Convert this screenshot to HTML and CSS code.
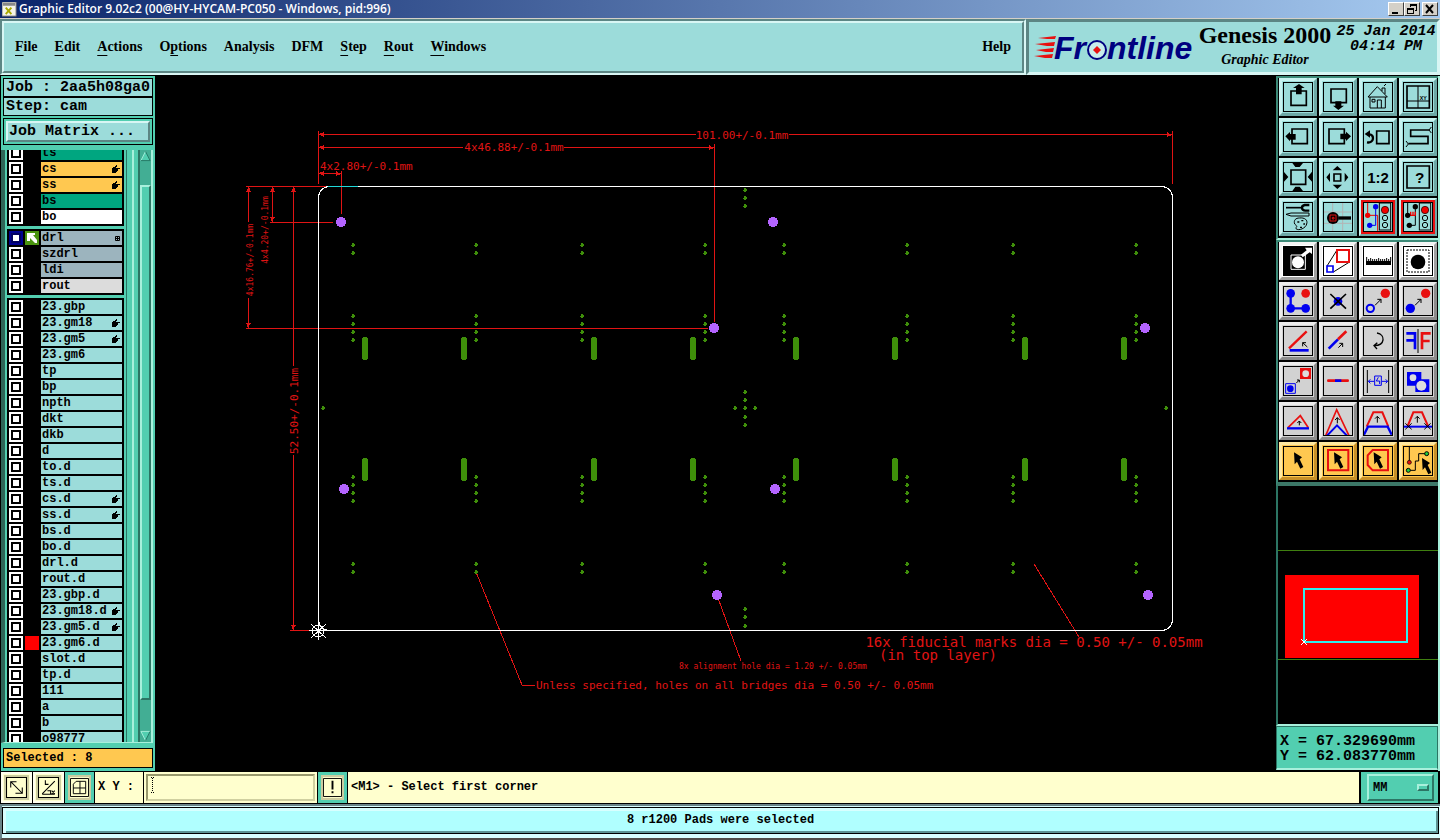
FILE: index.html
```html
<!DOCTYPE html>
<html lang="en">
<head>
<meta charset="utf-8">
<title>Graphic Editor</title>
<link rel="stylesheet" href="styles.css">
</head>
<body>
<svg class="defs" aria-hidden="true">
  <defs>
    <path id="hand" d="M4 0h1v2h-1v1h4v1H6v2H5v1H4v1H0V3h1V2h2V1h1z" shape-rendering="crispEdges"/>
    <path id="cursor" d="M0 0L24 15L17 21L28 44L19 49L9 28L2 36Z"/>
    <path id="dot" d="M-1 -2h2v1h1v2h-1v1h-2v-1h-1v-1h1z"/>
    <path id="slot" d="M-2 0h4v1h1v21h-1v1h-4v-1h-1v-21h1z"/>
    <g id="holes">
      <use href="#dot" y="245"/><use href="#dot" y="253"/>
      <use href="#dot" y="316"/><use href="#dot" y="324"/><use href="#dot" y="332"/><use href="#dot" y="340"/>
      <use href="#dot" y="477"/><use href="#dot" y="485"/><use href="#dot" y="493"/><use href="#dot" y="501"/>
      <use href="#dot" y="564"/><use href="#dot" y="572"/>
    </g>
    <path id="tip" d="M0 0L5 -2V3Z"/>
    <g id="light">
      <rect x="-17" y="387" width="34" height="81" fill="none" stroke="#000" stroke-width="3"/>
      <circle cy="408" r="11" fill="#f00000" stroke="#000" stroke-width="2"/>
      <circle cy="432" r="8" fill="none" stroke="#000" stroke-width="3"/>
      <circle cy="453" r="8" fill="none" stroke="#000" stroke-width="3"/>
    </g>
  </defs>
</svg>
<div class="window">
  <header class="titlebar">
    <svg class="app-icon" viewBox="0 0 16 16"><rect width="15" height="15" fill="#f4f4e8" stroke="#777"/><path d="M1 1h13v3H1z" fill="#888"/><path d="M4 6l6 7M10 6l-6 7" stroke="#a8a800" stroke-width="2"/></svg>
    <h1 class="title">Graphic Editor 9.02c2 (00@HY-HYCAM-PC050 - Windows, pid:996)</h1>
    <div class="window-buttons">
      <button class="wbtn" aria-label="Minimize"><svg viewBox="0 0 12 10"><path d="M2 8h6v2H2z"/></svg></button>
      <button class="wbtn" aria-label="Restore"><svg viewBox="0 0 12 10"><path d="M4 0h7v7H9V6h1V2H5v1H4zM1 4h7v6H1zM2 6v3h5V6z" fill-rule="evenodd"/></svg></button>
      <button class="wbtn wbtn-close" aria-label="Close"><svg viewBox="0 0 12 10"><path d="M2 1l7 8M9 1l-7 8" stroke="#000" stroke-width="2"/></svg></button>
    </div>
  </header>

  <div class="top">
    <nav class="menubar">
      <div class="menus">
        <button class="menu"><u>F</u>ile</button>
        <button class="menu"><u>E</u>dit</button>
        <button class="menu"><u>A</u>ctions</button>
        <button class="menu">O<u>p</u>tions</button>
        <button class="menu">Analysis</button>
        <button class="menu">DFM</button>
        <button class="menu"><u>S</u>tep</button>
        <button class="menu"><u>R</u>out</button>
        <button class="menu"><u>W</u>indows</button>
        <button class="menu menu-help">Help</button>
      </div>
    </nav>
    <div class="brand">
      <svg class="logo" viewBox="1030 30 164 32" role="img" aria-label="Frontline">
        <g fill="#e81010"><path d="M1037 37L1055 35L1054 38H1046ZM1034 43L1054 41L1053 45H1046ZM1035 49L1053 47L1052 51H1045ZM1033 55L1052 53L1051 57H1044Z"/></g>
        <g class="logo-text"><text x="1053" y="58">Fr</text><text x="1106" y="58">ntline</text></g>
        <circle cx="1096" cy="49" r="9" fill="#c8ecea" stroke="#000080" stroke-width="2"/>
        <path d="M1096 45l4 4-4 4-4-4z" fill="#e81010"/>
      </svg>
      <div class="product"><div class="product-name">Genesis 2000</div><div class="product-sub">Graphic Editor</div></div>
      <div class="clock"><div>25 Jan 2014</div><div>04:14 PM</div></div>
    </div>
  </div>

  <main class="main">
    <aside class="sidebar">
      <div class="job">
        <div class="field">Job : 2aa5h08ga0</div>
        <div class="field">Step: cam</div>
      </div>
      <div class="matrix-frame"><button class="matrix">Job Matrix ...</button></div>
      <div class="layers">
        <div class="list">
          <div class="group">
            <label class="row"><input type="checkbox"><i></i><span class="name signal">ts</span></label>
            <label class="row"><input type="checkbox"><i></i><span class="name mask">cs<svg class="hand" viewBox="0 0 8 8"><use href="#hand"/></svg></span></label>
            <label class="row"><input type="checkbox"><i></i><span class="name mask">ss<svg class="hand" viewBox="0 0 8 8"><use href="#hand"/></svg></span></label>
            <label class="row"><input type="checkbox"><i></i><span class="name signal">bs</span></label>
            <label class="row"><input type="checkbox"><i></i><span class="name paste">bo</span></label>
          </div>
          <div class="group">
            <label class="row"><input type="checkbox" checked><i class="green"><svg viewBox="0 0 14 14"><path d="M2 2h8v2H8l4 5v3h-2L5 7v3H2z" fill="#fff"/></svg></i><span class="name drill">drl<svg class="grid-mark" viewBox="0 0 5 5"><path d="M.5 .5h4v4h-4zM2.500 .5v4M.5 2.500h4" fill="none" stroke="#000"/></svg></span></label>
            <label class="row"><input type="checkbox"><i></i><span class="name drill">szdrl</span></label>
            <label class="row"><input type="checkbox"><i></i><span class="name drill">ldi</span></label>
            <label class="row"><input type="checkbox"><i></i><span class="name route">rout</span></label>
          </div>
          <div class="group">
            <label class="row"><input type="checkbox"><i></i><span class="name">23.gbp</span></label>
            <label class="row"><input type="checkbox"><i></i><span class="name">23.gm18<svg class="hand" viewBox="0 0 8 8"><use href="#hand"/></svg></span></label>
            <label class="row"><input type="checkbox"><i></i><span class="name">23.gm5<svg class="hand" viewBox="0 0 8 8"><use href="#hand"/></svg></span></label>
            <label class="row"><input type="checkbox"><i></i><span class="name">23.gm6</span></label>
            <label class="row"><input type="checkbox"><i></i><span class="name">tp</span></label>
            <label class="row"><input type="checkbox"><i></i><span class="name">bp</span></label>
            <label class="row"><input type="checkbox"><i></i><span class="name">npth</span></label>
            <label class="row"><input type="checkbox"><i></i><span class="name">dkt</span></label>
            <label class="row"><input type="checkbox"><i></i><span class="name">dkb</span></label>
            <label class="row"><input type="checkbox"><i></i><span class="name">d</span></label>
            <label class="row"><input type="checkbox"><i></i><span class="name">to.d</span></label>
            <label class="row"><input type="checkbox"><i></i><span class="name">ts.d</span></label>
            <label class="row"><input type="checkbox"><i></i><span class="name">cs.d<svg class="hand" viewBox="0 0 8 8"><use href="#hand"/></svg></span></label>
            <label class="row"><input type="checkbox"><i></i><span class="name">ss.d<svg class="hand" viewBox="0 0 8 8"><use href="#hand"/></svg></span></label>
            <label class="row"><input type="checkbox"><i></i><span class="name">bs.d</span></label>
            <label class="row"><input type="checkbox"><i></i><span class="name">bo.d</span></label>
            <label class="row"><input type="checkbox"><i></i><span class="name">drl.d</span></label>
            <label class="row"><input type="checkbox"><i></i><span class="name">rout.d</span></label>
            <label class="row"><input type="checkbox"><i></i><span class="name">23.gbp.d</span></label>
            <label class="row"><input type="checkbox"><i></i><span class="name">23.gm18.d<svg class="hand" viewBox="0 0 8 8"><use href="#hand"/></svg></span></label>
            <label class="row"><input type="checkbox"><i></i><span class="name">23.gm5.d<svg class="hand" viewBox="0 0 8 8"><use href="#hand"/></svg></span></label>
            <label class="row"><input type="checkbox"><i class="red"></i><span class="name">23.gm6.d</span></label>
            <label class="row"><input type="checkbox"><i></i><span class="name">slot.d</span></label>
            <label class="row"><input type="checkbox"><i></i><span class="name">tp.d</span></label>
            <label class="row"><input type="checkbox"><i></i><span class="name">111</span></label>
            <label class="row"><input type="checkbox"><i></i><span class="name">a</span></label>
            <label class="row"><input type="checkbox"><i></i><span class="name">b</span></label>
            <label class="row"><input type="checkbox"><i></i><span class="name">o98777</span></label>
          </div>
        </div>
        <div class="edge"></div>
        <div class="scrollbar">
          <svg class="arrow" viewBox="0 0 12 12"><path d="M6 1L11 11H1Z" fill="#52ceb0"/><path d="M1 11L6 1" stroke="#a8f0dc"/><path d="M6 1L11 11H1" fill="none" stroke="#237562"/></svg>
          <div class="trough"><div class="thumb"></div></div>
          <svg class="arrow" viewBox="0 0 12 12"><path d="M1 1H11L6 11Z" fill="#52ceb0"/><path d="M11 1H1L6 11" fill="none" stroke="#a8f0dc"/><path d="M11 1L6 11" stroke="#237562"/></svg>
        </div>
      </div>
      <div class="selected">Selected : 8</div>
    </aside>

    <section class="stage">
      <svg class="board" viewBox="155 76 1121 695" shape-rendering="crispEdges">
        <g class="dims">
          <path d="M318.500 131V184M1172.500 131V184M318 134.500H696M789 134.500H1172M318 147.500H463M564 147.500H714M714.500 144V322M318 173.500H341M341.500 171V214"/>
          <path d="M246 186.500H328M248.500 187V222M248.500 298V328M246 328.500H708M272.500 187V222M270 222.500H333M293.500 187V366M293.500 455V630M290 630.500H318"/>
          <path d="M1034 564L1079 637M718 598L741 661M476 572L522 685H535"/>
        </g>
        <g fill="#e01414">
          <use href="#tip" x="319" y="134"/><use href="#tip" x="319" y="147"/><use href="#tip" x="319" y="173"/>
          <use href="#tip" transform="translate(1172 135) rotate(180)"/><use href="#tip" transform="translate(714 148) rotate(180)"/><use href="#tip" transform="translate(341 174) rotate(180)"/>
          <use href="#tip" transform="translate(249 187) rotate(90)"/><use href="#tip" transform="translate(273 187) rotate(90)"/><use href="#tip" transform="translate(294 187) rotate(90)"/>
          <use href="#tip" transform="translate(248 328) rotate(-90)"/><use href="#tip" transform="translate(272 222) rotate(-90)"/><use href="#tip" transform="translate(293 630) rotate(-90)"/>
        </g>
        <rect x="318.500" y="186.500" width="854" height="444" rx="11" fill="none" stroke="#fff"/>
        <path d="M328 186.500H358" stroke="#20d8d8"/>
        <g fill="#3f8f0a">
          <use href="#holes" x="353"/><use href="#holes" x="476"/><use href="#holes" x="582"/><use href="#holes" x="705"/>
          <use href="#holes" x="784"/><use href="#holes" x="907"/><use href="#holes" x="1013"/><use href="#holes" x="1136"/>
          <g id="slots">
            <use href="#slot" x="365" y="337"/><use href="#slot" x="464" y="337"/><use href="#slot" x="594" y="337"/><use href="#slot" x="693" y="337"/>
            <use href="#slot" x="796" y="337"/><use href="#slot" x="895" y="337"/><use href="#slot" x="1025" y="337"/><use href="#slot" x="1124" y="337"/>
          </g>
          <use href="#slots" y="121"/>
          <use href="#dot" x="745" y="190"/><use href="#dot" x="745" y="198"/><use href="#dot" x="745" y="206"/>
          <use href="#dot" x="745" y="392"/><use href="#dot" x="745" y="400"/><use href="#dot" x="735" y="408"/><use href="#dot" x="745" y="408"/><use href="#dot" x="755" y="408"/><use href="#dot" x="745" y="417"/><use href="#dot" x="745" y="425"/>
          <use href="#dot" x="745" y="609"/><use href="#dot" x="745" y="617"/><use href="#dot" x="745" y="626"/>
          <use href="#dot" x="323" y="408"/><use href="#dot" x="1166" y="408"/>
        </g>
        <g fill="#b464ff">
          <ellipse cx="341" cy="222" rx="5" ry="5"/><ellipse cx="773" cy="222" rx="5" ry="5"/><ellipse cx="714" cy="328" rx="5" ry="5"/><ellipse cx="1145" cy="328" rx="5" ry="5"/>
          <ellipse cx="344" cy="489" rx="5" ry="5"/><ellipse cx="775" cy="489" rx="5" ry="5"/><ellipse cx="717" cy="595" rx="5" ry="5"/><ellipse cx="1148" cy="595" rx="5" ry="5"/>
        </g>
        <g fill="none" stroke="#fff"><circle cx="318" cy="631" r="6"/><path d="M309 630.500H328M318.500 621V640M311 624L326 638M326 624L311 638"/></g>
        <g class="note">
          <text x="742" y="139" text-anchor="middle">101.00+/-0.1mm</text>
          <text x="514" y="151" text-anchor="middle">4x46.88+/-0.1mm</text>
          <text x="320" y="170">4x2.80+/-0.1mm</text>
          <text transform="translate(298 411) rotate(-90)" text-anchor="middle">52.50+/-0.1mm</text>
          <text class="small" transform="translate(268 230) rotate(-90)" text-anchor="middle">4x4.20+/-0.1mm</text>
          <text class="small" transform="translate(253 260) rotate(-90)" text-anchor="middle">4x16.76+/-0.1mm</text>
          <text x="536" y="689">Unless specified, holes on all bridges dia = 0.50 +/- 0.05mm</text>
          <text class="small" x="679" y="669">8x alignment hole dia = 1.20 +/- 0.05mm</text>
          <text class="large" x="1034" y="647" text-anchor="middle">16x fiducial marks dia = 0.50 +/- 0.05mm</text>
          <text class="large" x="938" y="660" text-anchor="middle">(in top layer)</text>
        </g>
      </svg>
    </section>

    <aside class="tools">
      <div class="toolgrid">
        <button class="tool" aria-label="Pan up"><svg viewBox="30 27 84 84"><path d="M51 51H97V94H51Z" fill="none" stroke="#000" stroke-width="5"/><path d="M57 42L75 30L92 42H83V61H66V42Z"/></svg></button>
        <button class="tool" aria-label="Pan down"><svg viewBox="150 27 84 84"><path d="M171 45H217V86H171Z" fill="none" stroke="#000" stroke-width="5"/><path d="M193 108L177 95H184V82H202V95H210Z"/></svg></button>
        <button class="tool" aria-label="Home view"><svg viewBox="270 27 84 84"><path d="M282 69L310 38L340 69M282 69H340M288 69V102H334V69M324 51V42H333V60M330 36l6-6M310 102V78H322V102M294 76h9v8h-9z" fill="none" stroke="#000" stroke-width="3"/></svg></button>
        <button class="tool" aria-label="Coordinates view"><svg viewBox="390 27 84 84"><path d="M399 36H466V102H399Z" fill="none" stroke="#000" stroke-width="5"/><path d="M432 36V102M399 81H466" stroke="#000" stroke-width="3"/><text x="437" y="78" font-size="16">XY</text></svg></button>

        <button class="tool" aria-label="Pan left"><svg viewBox="30 147 84 84"><path d="M54 165H100V209H54Z" fill="none" stroke="#000" stroke-width="5"/><path d="M34 187L48 174V180H65V197H48V202Z"/></svg></button>
        <button class="tool" aria-label="Pan right"><svg viewBox="150 147 84 84"><path d="M165 165H211V209H165Z" fill="none" stroke="#000" stroke-width="5"/><path d="M231 187L216 173V179H199V196H216V201Z"/></svg></button>
        <button class="tool" aria-label="Previous view"><svg viewBox="270 147 84 84"><path d="M308 171H345V209H308Z" fill="none" stroke="#000" stroke-width="5"/><path d="M279 205C301 209 302 181 286 181" fill="none" stroke="#000" stroke-width="7"/><path d="M272 180L288 169V191Z"/></svg></button>
        <button class="tool" aria-label="Serpentine"><svg viewBox="390 147 84 84"><path d="M465 168H410V187H462V209H403" fill="none" stroke="#000" stroke-width="5"/><path d="M465 168l7-9M465 168l7 9M403 210l-7-9M403 210l-7 9" stroke="#000" stroke-width="3"/></svg></button>

        <button class="tool" aria-label="Zoom in"><svg viewBox="30 267 84 84"><path d="M51 288H95V331H51Z" fill="none" stroke="#000" stroke-width="5"/><path d="M55 267H87L77 279H64ZM55 351H87L77 338H64ZM30 294L43 309L30 323ZM114 293L101 309L114 323Z"/></svg></button>
        <button class="tool" aria-label="Zoom out"><svg viewBox="150 267 84 84"><path d="M180 300H200V321H180Z" fill="none" stroke="#000" stroke-width="5"/><path d="M190 276L204 289H176ZM190 345L204 332H176ZM157 310L168 296V324ZM223 310L212 296V324Z"/></svg></button>
        <button class="tool" aria-label="Zoom one to two"><svg viewBox="270 267 84 84"><text class="bold" x="312" y="326" font-size="45" text-anchor="middle">1:2</text></svg></button>
        <button class="tool" aria-label="Help"><svg viewBox="390 267 84 84"><path d="M399 276H466V342H399Z" fill="none" stroke="#000" stroke-width="5"/><text class="bold" x="437" y="328" font-size="46" text-anchor="middle">?</text></svg></button>

        <button class="tool" aria-label="Setup"><svg viewBox="30 387 84 84"><path d="M36 401H84" stroke="#000" stroke-width="5"/><path d="M106 393H92C80 396 82 410 94 410H106" fill="none" stroke="#000" stroke-width="7"/><path d="M36 421L51 417H105V426H51ZM62 450C58 438 66 432 76 432C92 430 102 438 98 450C96 462 74 472 66 464C64 460 72 458 66 454Z" fill="none" stroke="#000" stroke-width="3"/><path d="M70 442h6v4h-6zM82 438h6v4h-6zM88 448h5v4h-5zM78 458h6v4h-6z"/></svg></button>
        <button class="tool" aria-label="Inspect"><svg viewBox="150 387 84 84"><path d="M176 387V471M206 387V471M150 414H234M150 448H234" stroke="#b4b4b4" stroke-width="3"/><circle cx="177" cy="432" r="18"/><path d="M195 432H231" stroke="#000" stroke-width="10"/><path d="M168 423H186V441H168ZM175 430h5v5h-5z" fill="none" stroke="#e01010" stroke-width="3"/></svg></button>
        <button class="tool alert" aria-label="Nets control"><svg viewBox="270 387 84 84"><g fill="none" stroke-width="3"><path d="M281 387V424H311V471" stroke="#f00000"/><path d="M305 398V454H287" stroke="#0000f0"/></g><circle cx="281" cy="424" r="8" fill="#f00000"/><circle cx="305" cy="398" r="8" fill="#0000f0"/><circle cx="287" cy="454" r="8" fill="#0000f0"/><use href="#light" x="333"/></svg></button>
        <button class="tool alert" aria-label="Short control"><svg viewBox="390 387 84 84"><path d="M401 387V424M424 398V454H406" fill="none" stroke="#000" stroke-width="3"/><path d="M401 424H425M410 413V424M417 413V424M424 413V424" stroke="#f00000" stroke-width="4"/><circle cx="401" cy="424" r="8"/><circle cx="424" cy="398" r="8"/><circle cx="406" cy="454" r="8"/><use href="#light" x="453"/></svg></button>
      </div>

      <div class="toolgrid lower">
        <button class="tool white" aria-label="Pads"><svg viewBox="30 27 84 84"><path d="M30 27H114V111H30Z"/><path d="M51 51H94V94H51Z" fill="none" stroke="#fff" stroke-width="3"/><circle cx="72" cy="73" r="18" fill="#fff"/><path d="M86 58L81 50L98 37L93 29H114V48L107 43Z" fill="#fff"/></svg></button>
        <button class="tool white" aria-label="Scale"><svg viewBox="150 27 84 84"><path d="M159 84L189 36M178 102L225 73" stroke="#000" stroke-width="3"/><path d="M189 36H225V72H189Z" fill="none" stroke="#e81010" stroke-width="6"/><path d="M159 84H177V102H159Z" fill="none" stroke="#0000f0" stroke-width="5"/></svg></button>
        <button class="tool white" aria-label="Measure"><svg viewBox="270 27 84 84"><path d="M276 69H351V81H276Z"/><path d="M278 57V70M284 63V70M290 60V70M296 63V70M302 63V70M308 63V70M314 60V70M320 63V70M326 63V70M332 63V70M338 60V70M344 63V70M350 57V70" stroke="#000" stroke-width="3"/></svg></button>
        <button class="tool white" aria-label="Select feature"><svg viewBox="390 27 84 84"><path d="M399 36H465V102H399Z" fill="none" stroke="#000" stroke-width="3" stroke-dasharray="6 3"/><circle cx="432" cy="72" r="22"/></svg></button>

        <button class="tool grey" aria-label="Connect"><svg viewBox="30 147 84 84"><path d="M50 166V211H95" fill="none" stroke="#0000f0" stroke-width="7"/><g fill="#0000f0"><circle cx="50" cy="166" r="13"/><circle cx="50" cy="211" r="13"/><circle cx="95" cy="211" r="13"/></g><circle cx="95" cy="166" r="13" fill="#e81010"/></svg></button>
        <button class="tool grey" aria-label="Delete"><svg viewBox="150 147 84 84"><circle cx="192" cy="190" r="13" fill="#0000f0"/><path d="M169 168L216 212M216 168L169 212" stroke="#000" stroke-width="5"/></svg></button>
        <button class="tool grey" aria-label="Move"><svg viewBox="270 147 84 84"><circle cx="334" cy="166" r="14" fill="#e81010"/><circle cx="289" cy="211" r="11" fill="none" stroke="#0000f0" stroke-width="6"/><path d="M303 202L321 184M310 184H321V195" fill="none" stroke="#000" stroke-width="3"/></svg></button>
        <button class="tool grey" aria-label="Copy"><svg viewBox="390 147 84 84"><circle cx="455" cy="166" r="14" fill="#e81010"/><circle cx="409" cy="211" r="14" fill="#0000f0"/><path d="M423 202L441 184M430 184H441V195" fill="none" stroke="#000" stroke-width="3"/></svg></button>

        <button class="tool grey" aria-label="Rotate"><svg viewBox="30 267 84 84"><path d="M45 331L98 280" stroke="#e81010" stroke-width="7"/><path d="M47 337H104" stroke="#0000f0" stroke-width="8"/><path d="M100 327L86 314M86 325V314H96" fill="none" stroke="#000" stroke-width="3"/></svg></button>
        <button class="tool grey" aria-label="Line"><svg viewBox="150 267 84 84"><path d="M164 332L192 304" stroke="#0000f0" stroke-width="8"/><path d="M192 304L217 280" stroke="#e81010" stroke-width="8"/><path d="M193 329L206 316M196 316H206V327" fill="none" stroke="#000" stroke-width="3"/></svg></button>
        <button class="tool grey" aria-label="Turn"><svg viewBox="270 267 84 84"><path d="M309 285C335 290 334 322 301 323M310 314L300 323L309 333" fill="none" stroke="#000" stroke-width="4"/></svg></button>
        <button class="tool grey" aria-label="Mirror"><svg viewBox="390 267 84 84"><path d="M432 273V345" stroke="#000" stroke-width="3"/><path d="M397 286H423V334M397 307H423" fill="none" stroke="#0000f0" stroke-width="8"/><path d="M470 286H444V334M467 309H444" fill="none" stroke="#e81010" stroke-width="8"/></svg></button>

        <button class="tool grey" aria-label="Step copy"><svg viewBox="30 21 84 84"><path d="M78 24H111V57H78Z" fill="#e81010"/><circle cx="95" cy="41" r="10" fill="#ddd"/><path d="M35 71H64V100H35Z" fill="none" stroke="#0000f0" stroke-width="3"/><circle cx="49" cy="86" r="10" fill="#0000f0"/><path d="M67 69L76 60M69 60H76V67" fill="none" stroke="#000" stroke-width="3"/></svg></button>
        <button class="tool grey" aria-label="Segment"><svg viewBox="150 21 84 84"><path d="M163 62H221" stroke="#e81010" stroke-width="8" stroke-linecap="round"/><path d="M183 62H202" stroke="#0000f0" stroke-width="8"/></svg></button>
        <button class="tool grey" aria-label="Stretch"><svg viewBox="270 21 84 84"><path d="M280 30V99M344 30V99" stroke="#000" stroke-width="3"/><path d="M302 48H322V76H302ZM313 52L307 63H317V72M283 64H300M324 64H341M289 58L283 64L289 70M335 58L341 64L335 70" fill="none" stroke="#0000f0" stroke-width="3"/></svg></button>
        <button class="tool grey" aria-label="Merge"><svg viewBox="390 21 84 84"><path d="M399 36H442V58H466V96H424V77H399Z" fill="#0000f0"/><circle cx="417" cy="53" r="10" fill="#ddd"/><circle cx="442" cy="77" r="15" fill="#ddd"/></svg></button>

        <button class="tool grey" aria-label="Move segment"><svg viewBox="30 141 84 84"><path d="M42 203L79 167L103 203" fill="none" stroke="#e81010" stroke-width="5"/><path d="M39 205H105" stroke="#0000f0" stroke-width="7"/><path d="M76 196V183M70 189L76 183L82 189" fill="none" stroke="#000" stroke-width="3"/></svg></button>
        <button class="tool grey" aria-label="Move corner"><svg viewBox="150 141 84 84"><path d="M155 227L188 149L225 227" fill="none" stroke="#e81010" stroke-width="5"/><path d="M159 227L189 196L219 227" fill="none" stroke="#0000f0" stroke-width="6"/><path d="M190 190V173M183 180L190 173L197 180" fill="none" stroke="#000" stroke-width="3"/></svg></button>
        <button class="tool grey" aria-label="Move edge"><svg viewBox="270 141 84 84"><path d="M278 200L298 157H325L343 200" fill="none" stroke="#e81010" stroke-width="6"/><path d="M270 224L282 200H341L353 224" fill="none" stroke="#0000f0" stroke-width="7"/><path d="M310 188V169M303 176L310 169L317 176" fill="none" stroke="#000" stroke-width="3"/></svg></button>
        <button class="tool grey" aria-label="Move edge straight"><svg viewBox="390 141 84 84"><path d="M401 198L418 157H444L462 198" fill="none" stroke="#e81010" stroke-width="6"/><path d="M390 200H474" stroke="#0000f0" stroke-width="6"/><path d="M430 188V169M423 176L430 169L437 176M394 190L413 208M413 190L394 208M451 190L470 208M470 190L451 208" fill="none" stroke="#000" stroke-width="3"/></svg></button>

        <button class="tool gold" aria-label="Select"><svg viewBox="30 261 84 84"><use href="#cursor" x="60" y="277"/></svg></button>
        <button class="tool gold" aria-label="Select in box"><svg viewBox="150 261 84 84"><path d="M162 270H223V331H162Z" fill="none" stroke="#e81010" stroke-width="6"/><use href="#cursor" x="180" y="277"/></svg></button>
        <button class="tool gold" aria-label="Select in polygon"><svg viewBox="270 261 84 84"><path d="M296 270H342V331H296L281 315V286Z" fill="none" stroke="#e81010" stroke-width="6"/><use href="#cursor" x="299" y="277"/></svg></button>
        <button class="tool gold" aria-label="Select net"><svg viewBox="390 261 84 84"><path d="M406 261V306M403 331H424V303H434V281H458" fill="none" stroke="#000" stroke-width="3"/><circle cx="406" cy="307" r="6" fill="#e01010" stroke="#000" stroke-width="2"/><g fill="#20d040" stroke="#000" stroke-width="3"><circle cx="403" cy="331" r="6"/><circle cx="458" cy="281" r="6"/></g><use href="#cursor" x="444" y="294"/></svg></button>
      </div>

      <div class="preview">
        <svg viewBox="1278 486 160 238" shape-rendering="crispEdges">
          <path d="M1278 550.500H1438M1278 659.500H1438" stroke="#3f7f10"/>
          <path d="M1285 575H1419V658H1285Z" fill="#f00"/>
          <path d="M1304 589H1407V642H1304Z" fill="none" stroke="#30f0f0" stroke-width="2"/>
          <path d="M1301 639l6 6M1307 639l-6 6" stroke="#fff"/>
        </svg>
      </div>
      <div class="coords"><div>X = 67.329690mm</div><div>Y = 62.083770mm</div></div>
    </aside>
  </main>

  <div class="command">
    <button class="mode" aria-label="Snap off"><svg viewBox="0 0 20 20"><path d="M.5 .5h19v19H.5zM4.500 4.500L15 15M4.500 10V4.500H10M9 15.500H15.500V10" /></svg></button>
    <button class="mode" aria-label="Angle"><svg viewBox="0 0 20 20"><path d="M.5 .5h19v19H.5zM4 16L16 4M4 16.500H16M7 3v4h3M9 13h3v3M13 13l3 3M16 13l-3 3" /></svg></button>
    <button class="mode on" aria-label="Grid snap"><svg viewBox="0 0 20 20"><path d="M.5 .5h19v19H.5zM3.500 6.500L6.500 3.500H16.500V16.500H3.500zM10.500 3.500V16.500M3.500 10.500H16.500" /></svg></button>
    <label class="xy" for="xy">X Y :</label>
    <div class="xy-frame"><input id="xy" type="text"><svg class="caret" viewBox="0 0 3 16"><path d="M0 .5H3M0 15.500H3M1.500 1V15" fill="none" stroke="#000" stroke-dasharray="1 1"/></svg></div>
    <button class="mode on" aria-label="Alert"><svg viewBox="0 0 20 20"><path d="M.5 .5h19v19H.5z"/><path d="M9 3h2v9H9zM9 14h2v2H9z" class="solid"/></svg></button>
    <output class="message">&lt;M1&gt; - Select first corner</output>
    <div class="units"><select aria-label="Units"><option>MM</option><option>INCH</option></select></div>
  </div>

  <footer class="status"><div class="status-text">8 r1200 Pads were selected</div></footer>
</div>
</body>
</html>
```
FILE: styles.css
```css
:root {
  --pale: #9cdcda;
  --pale-light: #d8f6f4;
  --pale-dark: #5c8684;
  --green: #52ceb0;
  --green-light: #a8f0dc;
  --green-dark: #2c7564;
  --gold: #ffc850;
  --cream: #ffffce;
  --mono: "Liberation Mono", monospace;
  --serif: "Liberation Serif", serif;
}

*, *::after { box-sizing: border-box; }

body {
  margin: 0;
  background: #000;
  color: #000;
  font: bold 12px/14px var(--mono);
}

button, input, select {
  margin: 0;
  padding: 0;
  border: 0;
  border-radius: 0;
  background: none;
  color: inherit;
  font: inherit;
}

svg { display: block; }

.defs { position: absolute; width: 0; height: 0; }

.window {
  display: flex;
  flex-direction: column;
  height: 100vh;
}

/* Title bar */
.titlebar {
  display: flex;
  align-items: center;
  gap: 2px;
  height: 19px;
  padding: 0 2px;
  border-bottom: 1px solid #d4d0c8;
  background: linear-gradient(90deg, #0a246a, #a6caf0);
}
.app-icon { width: 15px; height: 15px; }
.title {
  flex: 1;
  margin: 0;
  color: #fff;
  font: 600 12px/18px "Open Sans", "Noto Sans", sans-serif;
}
.window-buttons { display: flex; }
.wbtn {
  width: 16px;
  height: 14px;
  padding: 1px;
  border: 1px solid;
  border-color: #fff #404040 #404040 #fff;
  background: #d4d0c8;
}
.wbtn svg { width: 12px; height: 10px; }
.wbtn-close { margin-left: 2px; }

/* Menu bar and product panel */
.top {
  display: flex;
  height: 57px;
  padding-bottom: 1px;
  background: #000;
}
.menubar {
  flex: 1;
  display: flex;
  border: 2px solid;
  border-color: var(--pale-dark) var(--pale-light) var(--pale-light) var(--pale-dark);
  background: var(--pale);
}
.menus {
  flex: 1;
  display: flex;
  align-items: center;
  gap: 17px;
  padding: 0 11px;
  border: 2px solid;
  border-color: var(--pale-light) var(--pale-dark) var(--pale-dark) var(--pale-light);
}
.menu { font: bold 14px/20px var(--serif); }
.menu u { text-underline-offset: 4px; text-decoration-thickness: 1px; }
.menu-help { margin-left: auto; }

.brand {
  display: flex;
  align-items: center;
  width: 414px;
  padding-left: 2px;
  border: 3px solid;
  border-color: var(--pale-dark) var(--pale-light) var(--pale-light) var(--pale-dark);
  background: var(--pale);
}
.logo { width: 164px; height: 32px; overflow: visible; }
.logo-text { font: italic bold 32px "Liberation Sans", sans-serif; fill: #000080; }
.product { width: 140px; text-align: center; white-space: nowrap; }
.product-name { font: bold 24px/26px var(--serif); }
.product-sub { font: italic bold 14px/24px var(--serif); }
.clock {
  flex: 1;
  align-self: flex-start;
  padding-top: 2px;
  text-align: center;
  white-space: nowrap;
  font: italic bold 15px/15px var(--mono);
}

/* Main area */
.main { flex: 1; display: flex; min-height: 0; }

.sidebar {
  display: flex;
  flex-direction: column;
  width: 155px;
  border-left: 1px solid #000;
  background: var(--green);
}
.job { margin: 2px; }
.field {
  height: 19px;
  padding-left: 2px;
  border: 1px solid #000;
  background: var(--pale);
  font: bold 15px/18px var(--mono);
  white-space: nowrap;
}
.matrix-frame { margin: 0 2px 5px; padding: 2px; border: 1px solid #000; }
.matrix {
  width: 100%;
  height: 21px;
  padding-left: 1px;
  border: 2px solid;
  border-color: var(--pale-light) var(--pale-dark) var(--pale-dark) var(--pale-light);
  background: var(--pale);
  font: bold 15px/16px var(--mono);
  text-align: left;
  white-space: nowrap;
}
.layers {
  flex: 1;
  display: flex;
  min-height: 0;
  margin-right: 2px;
  padding-left: 2px;
  border-left: 4px solid #2f6658;
  border-bottom: 1px solid var(--green-light);
}
.list { width: 117px; overflow: hidden; }
.group {
  display: flex;
  flex-direction: column;
  padding: 2px 2px 0;
  margin-bottom: 3px;
  background: #000;
}
.group:first-child { margin-top: -6px; }
.row { display: flex; gap: 2px; height: 16px; padding-bottom: 2px; }
.row input {
  appearance: none;
  width: 14px;
  height: 14px;
  border: 2px solid #fff;
  background: #fff;
  box-shadow: inset 0 0 0 2px #000;
}
.row input:checked { border-color: #000090; box-shadow: inset 0 0 0 2px #000060; }
.row i { width: 14px; height: 14px; }
.row i.green { background: #4a9410; }
.row i.red { background: #f00; }
.name {
  flex: 1;
  display: flex;
  align-items: center;
  justify-content: space-between;
  padding: 0 2px 0 1px;
  background: var(--pale);
  line-height: 14px;
}
.signal { background: #00a680; }
.mask { background: var(--gold); }
.paste { background: #fff; }
.drill { background: #9cb4be; }
.route { background: #dcdcdc; }
.hand { width: 8px; height: 8px; }
.grid-mark { width: 5px; height: 5px; }
.edge {
  flex: 1;
  margin: 0 4px 0 2px;
  border-left: 1px solid var(--green-dark);
  border-right: 2px solid var(--green-light);
}
.scrollbar {
  display: flex;
  flex-direction: column;
  width: 15px;
  border-left: 2px solid var(--green-dark);
  border-right: 2px solid var(--green-light);
  background: #42ae94;
}
.arrow { width: 11px; height: 12px; }
.trough { flex: 1; display: flex; flex-direction: column; padding: 23px 0 30px; }
.thumb {
  flex: 1;
  border: 2px solid;
  border-color: var(--green-light) var(--green-dark) var(--green-dark) var(--green-light);
  background: var(--green);
}
.selected {
  margin: 5px 2px 3px;
  padding-left: 2px;
  border: 1px solid #000;
  background: var(--gold);
  line-height: 18px;
}

.stage { flex: 1; min-width: 0; background: #000; }
.board { width: 100%; height: 100%; }
.dims { fill: none; stroke: #e01414; }
.note { fill: #e01414; font: 11px "DejaVu Sans Mono", monospace; }
.small { font-size: 8px; }
.large { font-size: 14px; }

/* Tool palette */
.tools {
  display: flex;
  flex-direction: column;
  width: 164px;
  border-right: 2px solid var(--green-light);
  background: #000;
}
.toolgrid {
  display: grid;
  grid-template-columns: repeat(4, 38px);
  gap: 2px;
  padding: 0 0 2px 1px;
  border-top: 2px solid #3c8a78;
  border-left: 2px solid #3c8a78;
  border-bottom: 2px solid var(--green-light);
}
.lower { border-bottom: 4px solid #3c7868; }
.tool {
  width: 38px;
  height: 38px;
  padding: 1px;
  border: 3px solid;
  border-color: #c8f2f0 #6ea8a6 #6ea8a6 #c8f2f0;
  background: var(--pale);
}
.tool svg { width: 30px; height: 30px; border: 1px solid #000; }
.tool text { font-family: "Liberation Sans", sans-serif; }
.tool .bold { font-weight: bold; }
.alert { padding: 2px; border-width: 2px; background: #e81010; }
.alert svg { background: var(--pale); }
.white { border-color: #f4f4f4 #a0a0a0 #a0a0a0 #f4f4f4; background: #fff; }
.grey { border-color: #ececec #8c8c8c #8c8c8c #ececec; background: #d2d2d2; }
.gold { border-color: #ffe8a0 #c89028 #c89028 #ffe8a0; background: var(--gold); }

.preview {
  flex: 1;
  min-height: 0;
  border-left: 2px solid var(--green-dark);
  border-bottom: 2px solid var(--green-light);
}
.preview svg { width: 100%; height: 100%; }
.coords {
  height: 44px;
  margin-bottom: 1px;
  padding: 7px 3px;
  border: 1px solid var(--green-dark);
  border-bottom: 2px solid var(--green-light);
  background: var(--green);
  font: bold 15px/15px var(--mono);
  white-space: nowrap;
}

/* Command line */
.command {
  display: flex;
  height: 33px;
  padding: 1px 2px 1px 1px;
  background: #000;
}
.mode {
  width: 31px;
  padding: 3px;
  margin-right: 1px;
  border: 2px solid #fffff0;
  background: var(--cream);
}
.mode svg {
  width: 21px;
  height: 21px;
  outline: 2px solid #cccca0;
  fill: none;
  stroke: #000;
}
.mode .solid { fill: #000; stroke: none; }
.mode.on { width: 29px; padding: 2px; border-color: var(--green); border-width: 3px; }
.mode.on svg { width: 19px; height: 21px; }
.xy { width: 48px; padding-left: 3px; background: var(--cream); line-height: 31px; }
.xy-frame {
  position: relative;
  width: 173px;
  margin: 0 1px;
  padding: 2px;
  background: var(--cream);
}
.xy-frame input {
  width: 100%;
  height: 100%;
  padding: 0 4px;
  border: 2px solid;
  border-color: #98986c #d0d0a0 #d0d0a0 #98986c;
}
.caret {
  position: absolute;
  top: 5px;
  left: 7px;
  width: 3px;
  height: 16px;
  pointer-events: none;
}
.message { flex: 1; padding-left: 3px; background: var(--cream); line-height: 31px; }
.units {
  position: relative;
  width: 77px;
  margin-left: 2px;
  padding: 2px 4px 2px 6px;
  background: var(--green);
}
.units select {
  appearance: none;
  width: 100%;
  height: 100%;
  padding-left: 4px;
  border: 2px solid;
  border-color: var(--green-light) var(--green-dark) var(--green-dark) var(--green-light);
}
.units::after {
  content: "";
  position: absolute;
  top: 12px;
  right: 9px;
  width: 12px;
  height: 7px;
  border: 2px solid;
  border-color: var(--green-light) var(--green-dark) var(--green-dark) var(--green-light);
  pointer-events: none;
}

/* Status line */
.status {
  height: 36px;
  padding: 1px 1px 2px 0;
  border-top: 2px solid #6a8488;
  border-bottom: 2px solid #504c48;
  border-left: 2px solid #6a8488;
  background: #d8ffff;
}
.status-text {
  height: 27px;
  border: 1px solid #000;
  box-shadow: inset 3px 3px 0 #d8ffff, inset -2px -2px 0 #5c9494;
  background: #b0ffff;
  line-height: 24px;
  text-align: center;
}
```
